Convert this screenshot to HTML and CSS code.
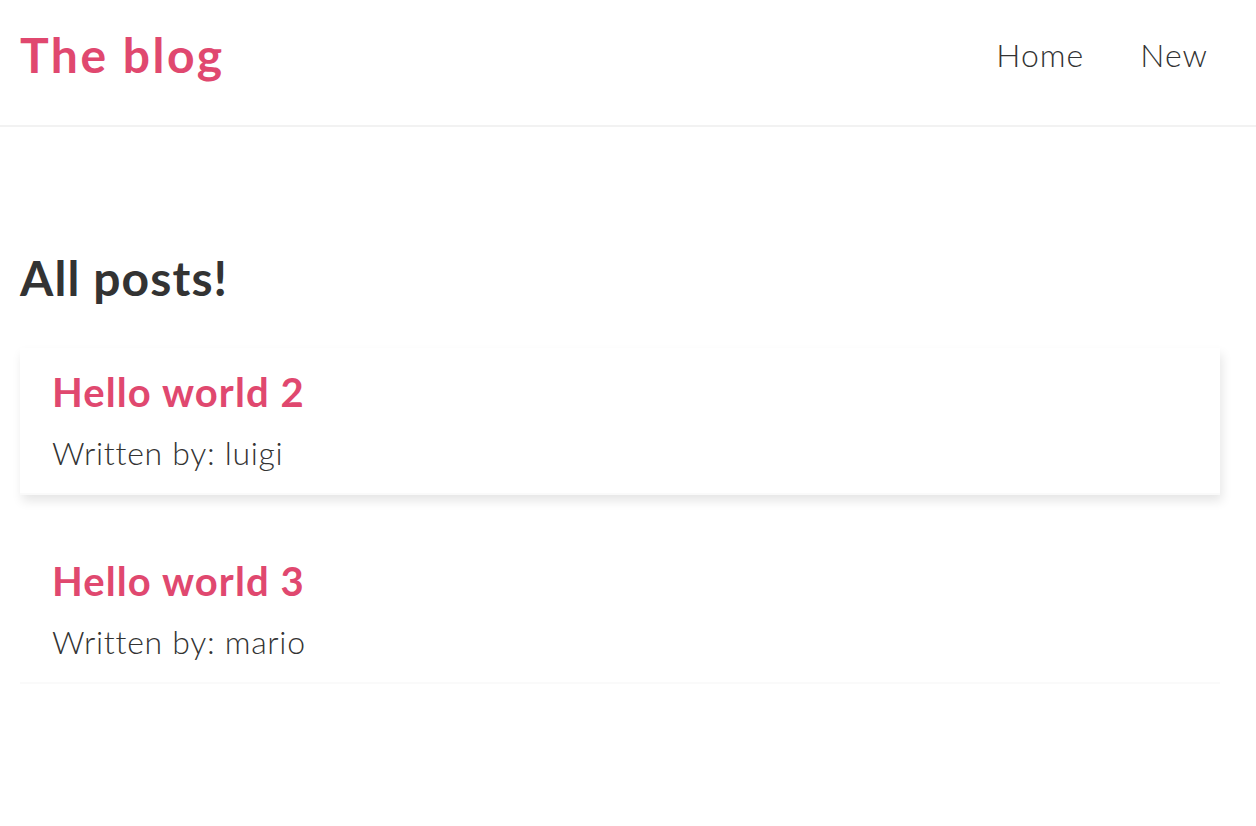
FILE: index.html
```html
<!DOCTYPE html>
<html lang="en">
<head>
<meta charset="utf-8">
<title>The blog</title>
<link rel="stylesheet" href="styles.css">
</head>
<body>
<nav class="navbar">
  <h1 class="brand">The blog</h1>
  <div class="links">
    <a href="#" class="link">Home</a>
    <a href="#" class="link">New</a>
  </div>
</nav>
<main class="content">
  <h2 class="page-title">All posts!</h2>
  <div class="blog-list">
    <div class="blog-preview is-hover">
      <h2 class="preview-title">Hello world 2</h2>
      <p class="preview-author">Written by: luigi</p>
    </div>
    <div class="blog-preview">
      <h2 class="preview-title">Hello world 3</h2>
      <p class="preview-author">Written by: mario</p>
    </div>
  </div>
</main>
</body>
</html>
```

FILE: styles.css
```css
* {
  margin: 0;
  box-sizing: border-box;
}
body {
  margin: 0;
  font-family: Lato, "Noto Sans", sans-serif;
  color: #333;
  background: #fff;
}
.navbar {
  display: flex;
  align-items: flex-start;
  height: 127px;
  padding: 26px 36px 0 20px;
  border-bottom: 2px solid #f2f2f2;
}
.brand {
  font-size: 48px;
  line-height: 58px;
  font-weight: 700;
  letter-spacing: 2.5px;
  color: #e0486f;
}
.links {
  margin-left: auto;
  display: flex;
  gap: 32px;
  margin-top: 10px;
}
.link {
  font-size: 32px;
  line-height: 38px;
  font-weight: 300;
  letter-spacing: 1px;
  padding: 0 12px;
  color: #333;
  text-decoration: none;
}
.content {
  padding: 122px 36px 0 20px;
}
.page-title {
  font-size: 48px;
  line-height: 58px;
  font-weight: 700;
  letter-spacing: 1.1px;
  color: #333;
  margin-bottom: 41px;
}
.blog-list {
  display: flex;
  flex-direction: column;
  gap: 42px;
}
.blog-preview {
  padding: 20px 32px 21px;
  border-bottom: 2px solid #fafafa;
}
.blog-preview.is-hover {
  box-shadow: 2px 6px 10px rgba(0, 0, 0, 0.1);
}
.preview-title {
  font-size: 40px;
  line-height: 48px;
  font-weight: 700;
  letter-spacing: 1.1px;
  color: #e0486f;
  margin-bottom: 18px;
}
.preview-author {
  font-size: 32px;
  line-height: 38px;
  font-weight: 300;
  letter-spacing: 0.7px;
  color: #333;
}
```
